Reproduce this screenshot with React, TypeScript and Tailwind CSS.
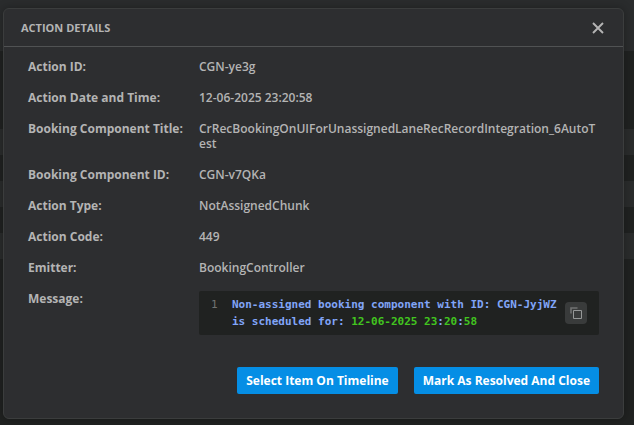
import { useState } from "react";

type Detail = {
  label: string;
  value: string;
};

const details: Detail[] = [
  { label: "Action ID:", value: "CGN-ye3g" },
  { label: "Action Date and Time:", value: "12-06-2025 23:20:58" },
  {
    label: "Booking Component Title:",
    value: "CrRecBookingOnUIForUnassignedLaneRecRecordIntegration_6AutoTest",
  },
  { label: "Booking Component ID:", value: "CGN-v7QKa" },
  { label: "Action Type:", value: "NotAssignedChunk" },
  { label: "Action Code:", value: "449" },
  { label: "Emitter:", value: "BookingController" },
];

function CloseIcon() {
  return (
    <svg viewBox="0 0 12 12" className="size-3" aria-hidden="true">
      <path d="M1 1 11 11M11 1 1 11" fill="none" stroke="currentColor" strokeWidth="1.9" />
    </svg>
  );
}

function CopyIcon() {
  return (
    <svg viewBox="0 0 12 12" className="size-3" aria-hidden="true">
      <path d="M1 6.5V1h6.5" fill="none" stroke="currentColor" strokeWidth="1.6" opacity="0.6" />
      <path d="M3.5 3.5h8v8h-8z" fill="none" stroke="currentColor" />
    </svg>
  );
}

// Table rows that stay visible around the dialog
function Backdrop() {
  return (
    <div className="absolute inset-0 flex flex-col bg-[#202221]" aria-hidden="true">
      <div className="h-[51px] bg-[#2a2c2d]" />
      <div className="h-[78px]" />
      <div className="h-[26px] bg-[#2a2c2c]" />
      <div className="h-[26px]" />
      <div className="h-[26px] bg-[#2a2c2c]" />
      <div className="h-[26px]" />
      <div className="h-[26px] bg-[#2a2c2c]" />
    </div>
  );
}

function Message() {
  return (
    <div className="flex items-center rounded-xs bg-[#202221] py-[5px] pr-3 font-['DejaVu_Sans_Mono','Liberation_Mono',monospace] text-[11px] leading-[17px]">
      <span className="w-[33px] shrink-0 self-start pl-3 text-[#707372]">1</span>
      <code className="min-w-0 flex-1 font-[inherit] font-bold text-[#81a5f8]">
        <span>Non-assigned booking component with ID: CGN-JyjWZ</span>{" "}
        <span>is scheduled for:</span>{" "}
        <span className="text-[#42c51f]">12-06-2025 23</span>
        <span>:</span>
        <span className="text-[#42c51f]">20</span>
        <span>:</span>
        <span className="text-[#42c51f]">58</span>
      </code>
      <button
        type="button"
        aria-label="Copy message"
        className="ml-2 flex size-[22px] shrink-0 items-center justify-center rounded bg-[#393b3b] text-[#969898]"
      >
        <CopyIcon />
      </button>
    </div>
  );
}

export default function App() {
  const [open, setOpen] = useState(true);

  return (
    <div className="relative min-h-screen overflow-hidden pt-2 pr-[10px] pb-1.5 pl-[3px] font-['Open_Sans',sans-serif] text-[12px] leading-[15px] text-[#b4b4b4]">
      <Backdrop />

      {open ? (
        <section
          role="dialog"
          aria-labelledby="dialog-title"
          className="relative rounded-md border border-[#3b3d3d] bg-[#2d2e30] shadow-[0_0_10px_rgba(0,0,0,0.3)]"
        >
          <header className="flex h-[38px] items-center justify-between border-b border-[#505253] pr-[19px] pl-[17px]">
            <h1 id="dialog-title" className="text-[11px] font-bold">
              ACTION DETAILS
            </h1>
            <button type="button" aria-label="Close" onClick={() => setOpen(false)}>
              <CloseIcon />
            </button>
          </header>

          <div className="pt-3 pr-6 pb-6 pl-6">
            <dl className="flex flex-col gap-4">
              {details.map((detail) => (
                <div key={detail.label} className="flex">
                  <dt className="w-[171px] shrink-0 font-bold">{detail.label}</dt>
                  <dd className="min-w-0 flex-1 font-semibold break-all">{detail.value}</dd>
                </div>
              ))}
              <div className="flex">
                <dt className="w-[171px] shrink-0 font-bold">Message:</dt>
                <dd className="min-w-0 flex-1">
                  <Message />
                </dd>
              </div>
            </dl>

            <div className="mt-8 flex justify-end gap-4 text-white">
              <button type="button" className="h-[27px] rounded-xs bg-[#058ee5] px-[9px] font-bold">
                Select Item On Timeline
              </button>
              <button type="button" className="h-[27px] rounded-xs bg-[#058ee5] px-[9px] font-bold">
                Mark As Resolved And Close
              </button>
            </div>
          </div>
        </section>
      ) : null}
    </div>
  );
}
